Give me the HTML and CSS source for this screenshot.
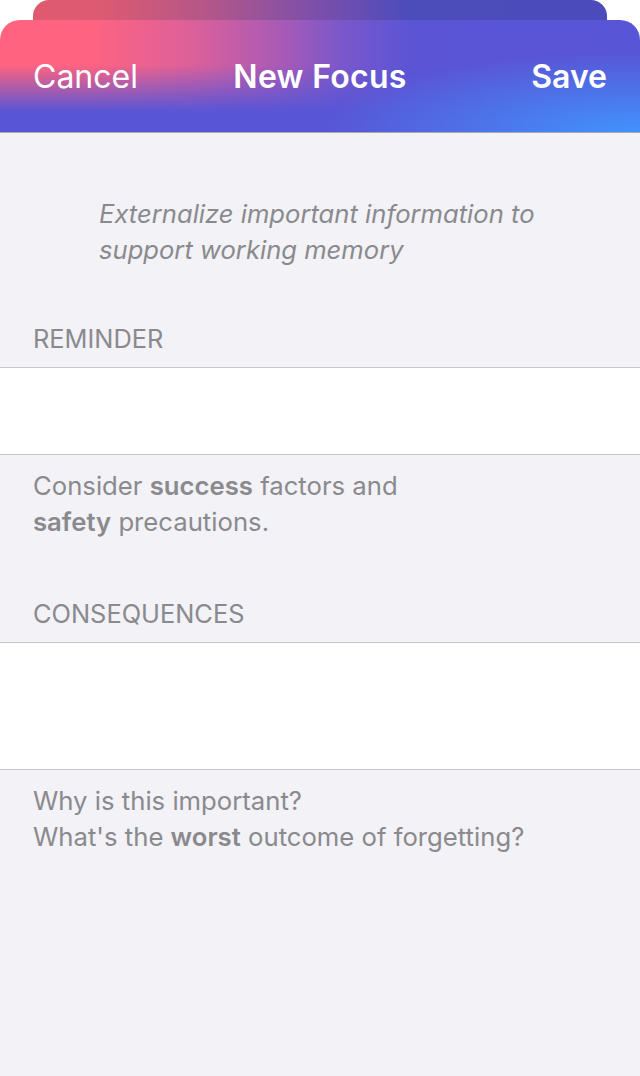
FILE: index.html
```html
<!DOCTYPE html>
<html lang="en">
<head>
  <meta charset="UTF-8">
  <meta name="viewport" content="width=device-width, initial-scale=1.0">
  <title>New Focus</title>
  <link rel="stylesheet" href="styles.css">
</head>
<body>

  <div class="top">
    <div class="sheet-back"></div>
    <header class="nav">
      <span class="nav-btn">Cancel</span>
      <span class="nav-title">New Focus</span>
      <span class="nav-btn nav-save">Save</span>
    </header>
  </div>

  <main class="form">
    <p class="intro">Externalize important information to<br>support working memory</p>

    <div class="section-title">REMINDER</div>
    <div class="field field-short"></div>
    <p class="footer">Consider <b>success</b> factors and<br><b>safety</b> precautions.</p>

    <div class="section-title">CONSEQUENCES</div>
    <div class="field field-tall"></div>
    <p class="footer">Why is this important?<br>What's the <b>worst</b> outcome of forgetting?</p>
  </main>

</body>
</html>
```

FILE: styles.css
```css
body {
  margin: 0;
  background: #f2f2f7;
  font-family: Inter, "Noto Sans", Arial, sans-serif;
  color: #8a8a8e;
  height: 1076px;
  overflow: hidden;
}
.top {
  background: #fff;
}
.sheet-back {
  height: 20px;
  margin: 0 33px;
  border-radius: 16px 16px 0 0;
  background: linear-gradient(90deg, #df5a6f 0%, #dc5a72 12%, #b45788 30%, #7a4fac 50%, #4d4cbb 65%, #4b4bbb 100%);
}
.nav {
  box-sizing: border-box;
  height: 113px;
  border-radius: 20px 20px 0 0;
  padding: 0 33px;
  display: flex;
  align-items: center;
  justify-content: space-between;
  color: #fff;
  font-size: 32px;
  background:
    radial-gradient(ellipse 320px 80px at 100% 100%, rgba(64,150,255,0.95), rgba(64,150,255,0) 100%),
    linear-gradient(180deg, rgba(88,85,214,0) 40%, #5855d6 82%),
    linear-gradient(90deg, #ff6380 0%, #ff6380 14%, #dc609a 30%, #a85ab6 44%, #7857cb 54%, #5b55d6 64%, #5855d6 100%);
  border-bottom: 1px solid #a8a8b0;
}
.nav-btn {
  width: 120px;
}
.nav-save {
  text-align: right;
  font-weight: 600;
}
.nav-title {
  font-weight: 600;
  letter-spacing: 0.3px;
}
.form {
  padding-top: 63px;
}
.intro {
  margin: 0 0 56px;
  padding: 0 99px;
  font-size: 25.6px;
  font-style: italic;
  line-height: 36px;
}
.section-title {
  padding: 0 33px 13px;
  font-size: 25.4px;
  line-height: 30px;
}
.field {
  background: #fff;
  border-top: 1px solid #c8c7cc;
  border-bottom: 1px solid #c8c7cc;
}
.field-short {
  height: 86px;
}
.field-tall {
  height: 126px;
}
.footer {
  margin: 0 0 59px;
  padding: 13px 33px 0;
  font-size: 25.7px;
  line-height: 36px;
}
.footer b {
  font-weight: 600;
}
```
